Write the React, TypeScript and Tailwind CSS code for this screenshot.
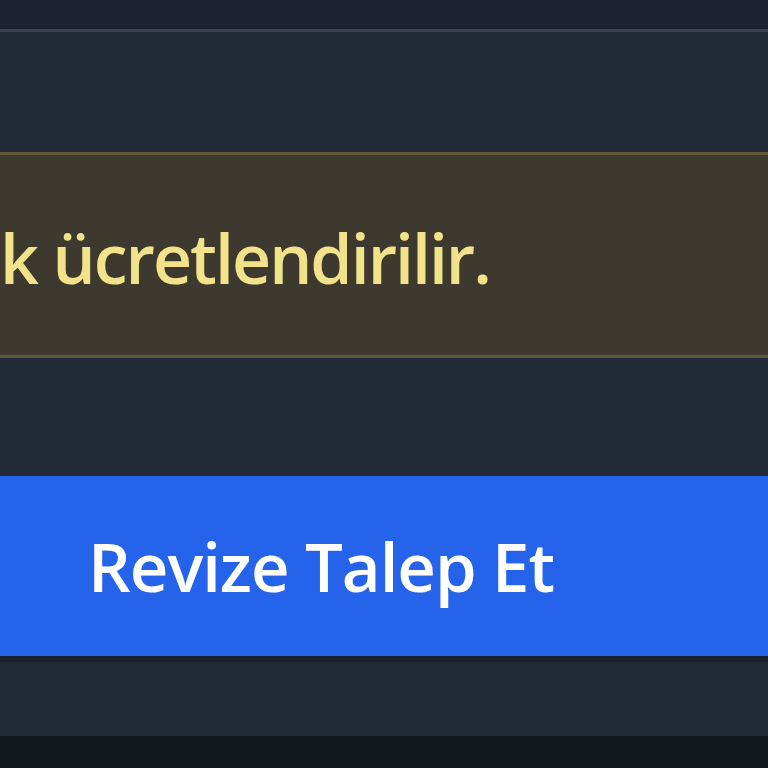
export default function App() {
  return (
    <div className="h-[768px] w-[768px] overflow-hidden bg-[#222937] flex flex-col" style={{ fontFamily: '"Open Sans", "Noto Sans", sans-serif' }}>
      {/* header strip */}
      <div className="h-[32px] shrink-0 bg-[#1c2231] border-b-[3px] border-[#3a4150]" />

      <div className="flex-1 flex flex-col pt-[120px]">
        {/* warning note */}
        <div className="h-[206px] shrink-0 bg-[#3e392f] border-y-[3px] border-[#5e5838] flex items-center overflow-hidden">
          <span className="whitespace-nowrap text-[68px] font-semibold leading-none text-[#f2e38b] tracking-[-2px] pt-[5px]">
            k ücretlendirilir.
          </span>
        </div>

        <div className="h-[118px] shrink-0" />

        {/* action button */}
        <button className="h-[180px] w-full shrink-0 bg-[#2563eb] flex items-center pl-[88px] text-left">
          <span className="whitespace-nowrap text-[67px] font-semibold leading-none text-white tracking-[-1px]">
            Revize Talep Et
          </span>
        </button>

        <div className="h-[80px] shrink-0 border-t-[6px] border-[#16202a] bg-[#212836]" />
        <div className="flex-1 bg-[#141920]" />
      </div>
    </div>
  );
}
